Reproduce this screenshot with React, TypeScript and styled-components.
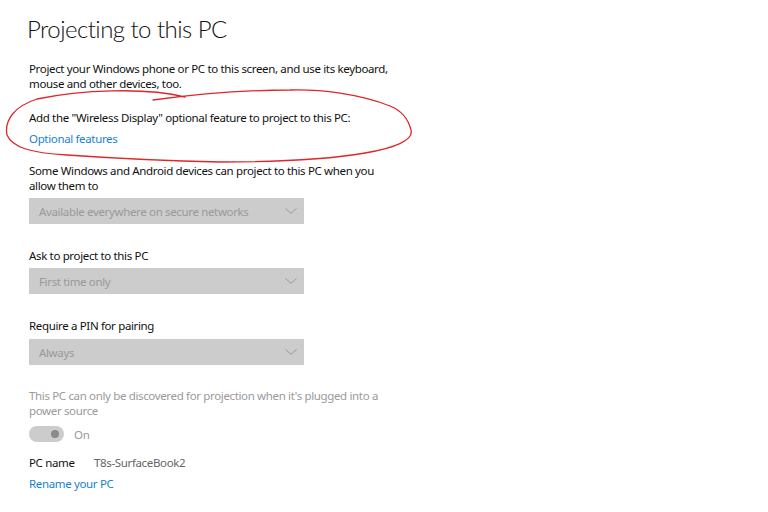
import React from 'react';
import styled, { createGlobalStyle } from 'styled-components';

const GlobalStyle = createGlobalStyle`
    html, body {
        margin: 0;
        padding: 0;
        background: #ffffff;
    }
    body {
        font-family: 'Segoe UI', 'Noto Sans', 'Liberation Sans', sans-serif;
        color: #111111;
    }
`;

const Page = styled.div`
    position: relative;
    width: 768px;
    height: 512px;
    overflow: hidden;
    box-sizing: border-box;
    padding: 13px 0 0 29px;
    display: flex;
    flex-direction: column;
    align-items: flex-start;
    font-size: 11.5px;
    letter-spacing: -0.35px;
`;

const Title = styled.h1`
    margin: 0 0 0 -2px;
    font-family: 'Segoe UI', Lato, 'Noto Sans', sans-serif;
    font-size: 24px;
    line-height: 32px;
    font-weight: 300;
    letter-spacing: -0.55px;
    color: #111;
`;

type TextProps = {
    $top?: number;
    $muted?: boolean;
};

const Text = styled.p<TextProps>`
    margin: ${(p) => p.$top || 0}px 0 0 0;
    max-width: 362px;
    line-height: 15px;
    color: ${(p) => (p.$muted ? '#9a9a9a' : '#111')};
`;

const Link = styled.a<TextProps>`
    margin-top: ${(p) => p.$top || 0}px;
    line-height: 15px;
    color: #1a7fd4;
    text-decoration: none;
    cursor: pointer;
`;

const Select = styled.div<TextProps>`
    margin-top: ${(p) => p.$top || 0}px;
    width: 275px;
    height: 26px;
    box-sizing: border-box;
    padding: 0 7px 0 10px;
    background: #cccccc;
    display: flex;
    align-items: center;
    justify-content: space-between;
    color: #999;
`;

const ToggleRow = styled.div<TextProps>`
    margin-top: ${(p) => p.$top || 0}px;
    display: flex;
    align-items: center;
    gap: 10px;
    color: #9a9a9a;
`;

const Track = styled.div`
    width: 35px;
    height: 16px;
    border-radius: 8px;
    background: #cccccc;
    display: flex;
    align-items: center;
    justify-content: flex-end;
    padding-right: 5px;
    box-sizing: border-box;
`;

const Knob = styled.span`
    width: 8px;
    height: 8px;
    border-radius: 50%;
    background: #8a8a8a;
`;

const NameRow = styled.div<TextProps>`
    margin-top: ${(p) => p.$top || 0}px;
    display: flex;
    line-height: 15px;
`;

const NameLabel = styled.span`
    width: 65px;
`;

const NameValue = styled.span`
    color: #666;
`;

const Annotation = styled.svg`
    position: absolute;
    left: 0;
    top: 0;
    pointer-events: none;
`;

const Chevron = () => (
    <svg width="12" height="6" viewBox="0 0 12 6">
        <path d="M0.5 0.5 L6 5.3 L11.5 0.5" fill="none" stroke="#9a9a9a" strokeWidth="1" />
    </svg>
);

const Dropdown = ({ value, top }: { value: string; top: number }) => (
    <Select $top={top}>
        <span>{value}</span>
        <Chevron />
    </Select>
);

const App = () => {
    return (
        <>
            <GlobalStyle />
            <Page>
                <Title>Projecting to this PC</Title>
                <Text $top={16}>
                    Project your Windows phone or PC to this screen, and use its keyboard, mouse and other devices, too.
                </Text>
                <Text $top={19}>Add the "Wireless Display" optional feature to project to this PC:</Text>
                <Link $top={6}>Optional features</Link>
                <Text $top={17}>Some Windows and Android devices can project to this PC when you allow them to</Text>
                <Dropdown top={5} value="Available everywhere on secure networks" />
                <Text $top={24}>Ask to project to this PC</Text>
                <Dropdown top={5} value="First time only" />
                <Text $top={24}>Require a PIN for pairing</Text>
                <Dropdown top={6} value="Always" />
                <Text $top={23} $muted>
                    This PC can only be discovered for projection when it's plugged into a power source
                </Text>
                <ToggleRow $top={8}>
                    <Track>
                        <Knob />
                    </Track>
                    <span>On</span>
                </ToggleRow>
                <NameRow $top={13}>
                    <NameLabel>PC name</NameLabel>
                    <NameValue>T8s-SurfaceBook2</NameValue>
                </NameRow>
                <Link $top={6}>Rename your PC</Link>

                <Annotation width="768" height="512" viewBox="0 0 768 512">
                    <path
                        d="M185 97 C145 87 80 90 37 99 C15 106 4 120 7 135 C12 147 30 153 67 155 C110 158 170 161 220 162 C280 162 330 159 365 153 C395 148 414 140 411 130 C408 118 400 110 390 106 C360 94 320 89 290 90 C240 90 190 95 153 100"
                        fill="none"
                        stroke="#e0262a"
                        strokeWidth="1.3"
                        strokeLinecap="round"
                    />
                </Annotation>
            </Page>
        </>
    );
};

export default App;
